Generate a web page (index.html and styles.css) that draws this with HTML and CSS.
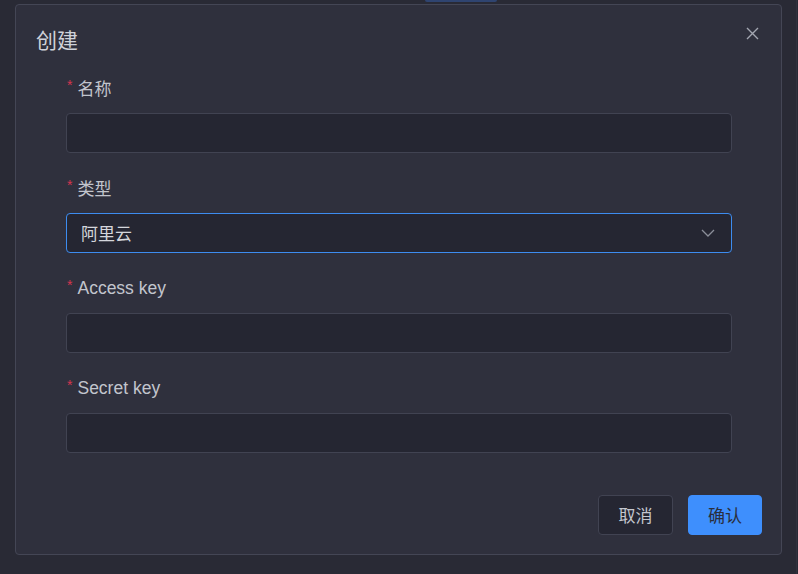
FILE: index.html
```html
<!DOCTYPE html>
<html lang="zh">
<head>
<meta charset="utf-8">
<link rel="stylesheet" href="styles.css">
</head>
<body>
<div class="page">
  <div class="behind-tab"></div>
  <div class="behind-line"></div>
  <div class="dialog">
    <div class="dialog-header">
      <span class="dialog-title">创建</span>
      <button class="close-btn" aria-label="close">
        <svg width="13" height="13" viewBox="0 0 13 13"><path d="M1 1 L12 12 M12 1 L1 12" stroke="#a3a6b1" stroke-width="1.4" fill="none"/></svg>
      </button>
    </div>
    <form class="form">
      <div class="field">
        <label class="label"><span class="req">*</span>名称</label>
        <div class="input"></div>
      </div>
      <div class="field">
        <label class="label"><span class="req">*</span>类型</label>
        <div class="input select">
          <span class="select-value">阿里云</span>
          <svg class="chevron" width="14" height="8" viewBox="0 0 14 8"><path d="M1 1 L7 7 L13 1" stroke="#8b8e99" stroke-width="1.3" fill="none"/></svg>
        </div>
      </div>
      <div class="field">
        <label class="label latin"><span class="req">*</span>Access key</label>
        <div class="input"></div>
      </div>
      <div class="field">
        <label class="label latin"><span class="req">*</span>Secret key</label>
        <div class="input"></div>
      </div>
    </form>
    <div class="dialog-footer">
      <button class="btn btn-cancel">取消</button>
      <button class="btn btn-primary">确认</button>
    </div>
  </div>
</div>
</body>
</html>
```

FILE: styles.css
```css
* { box-sizing: border-box; }
html, body {
  margin: 0;
  padding: 0;
  background: #292a35;
  width: 798px;
  height: 574px;
  overflow: hidden;
  font-family: "Liberation Sans", "Noto Sans CJK SC", sans-serif;
}
.page {
  position: relative;
  width: 798px;
  height: 574px;
  padding: 4px 16px 0 15px;
}
.behind-tab {
  position: absolute;
  left: 425px;
  top: 0;
  width: 72px;
  height: 2px;
  background: #2f4470;
  border-radius: 0 0 3px 3px;
}
.behind-line {
  position: absolute;
  left: 796px;
  top: 0;
  width: 1px;
  height: 574px;
  background: #30323e;
}
.dialog {
  position: relative;
  width: 767px;
  height: 551px;
  background: #2f303d;
  border: 1px solid #444655;
  border-radius: 4px;
  display: flex;
  flex-direction: column;
}
.dialog-header {
  display: flex;
  justify-content: space-between;
  align-items: flex-start;
  padding: 21px 22px 0 20px;
  height: 71px;
}
.dialog-title {
  font-family: "Noto Sans CJK SC", sans-serif;
  font-size: 21px;
  line-height: 26px;
  color: #cfd2d9;
}
.close-btn {
  background: none;
  border: 0;
  padding: 0;
  margin-top: 1px;
  width: 13px;
  height: 13px;
  display: flex;
}
.form {
  padding: 0 49px 0 50px;
  display: flex;
  flex-direction: column;
}
.field {
  display: flex;
  flex-direction: column;
  margin-bottom: 23px;
}
.label {
  font-family: "Noto Sans CJK SC", sans-serif;
  font-size: 17px;
  line-height: 22px;
  height: 24px;
  color: #c2c5cd;
  margin-bottom: 13px;
  display: flex;
  align-items: center;
}
.label.latin {
  font-family: "Liberation Sans", "Noto Sans CJK SC", sans-serif;
  font-size: 17.5px;
}
.req {
  color: #d6354f;
  font-family: "Liberation Sans", sans-serif;
  font-size: 14px;
  margin-right: 5px;
  margin-left: 1px;
  align-self: flex-start;
  line-height: 18px;
}
.input {
  height: 40px;
  background: #252632;
  border: 1px solid #414352;
  border-radius: 4px;
}
.select {
  border-color: #3d8cf0;
  display: flex;
  align-items: center;
  justify-content: space-between;
  padding: 0 16px 0 14px;
}
.select-value {
  font-family: "Noto Sans CJK SC", sans-serif;
  font-size: 17px;
  color: #d4d6dc;
  margin-top: -2px;
}
.chevron { margin-top: 0; }
.dialog-footer {
  margin-top: auto;
  display: flex;
  justify-content: flex-end;
  gap: 15px;
  padding: 0 19px 19px 0;
}
.btn {
  height: 40px;
  width: 75px;
  border-radius: 4px;
  font-family: "Noto Sans CJK SC", sans-serif;
  font-size: 17px;
  padding: 0 0 2px;
}
.btn-cancel {
  background: #252632;
  border: 1px solid #414352;
  color: #c4c7cf;
}
.btn-primary {
  width: 74px;
  background: #3e8ffd;
  border: 1px solid #3e8ffd;
  color: #2a2e3c;
}
```
